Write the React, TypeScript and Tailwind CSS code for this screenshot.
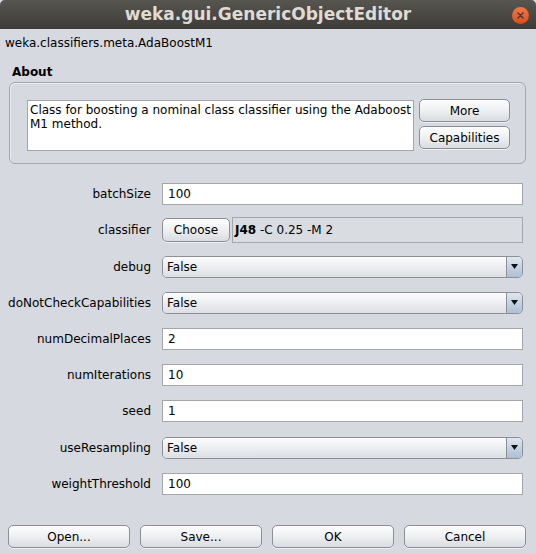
import React from "react";

const font = { fontFamily: '"DejaVu Sans", "Liberation Sans", sans-serif' };

const btn =
  "flex items-center justify-center rounded-[5px] border border-[#8c9096] bg-gradient-to-b from-[#fdfdfd] via-[#eef0f2] to-[#d9dce0] text-[12px] text-black shadow-[0_1px_0_rgba(255,255,255,0.6)]";

const TextField = ({ value }: { value: string }) => (
  <div className="h-[22px] w-full border border-[#a3a6ab] bg-white pl-[5px] flex items-center text-[12px] text-black">
    {value}
  </div>
);

const Combo = ({ value }: { value: string }) => (
  <div className="h-[22px] w-full flex rounded-[5px] border border-[#8c9096] overflow-hidden">
    <div className="flex-1 flex items-center pl-[4px] text-[12px] text-black bg-gradient-to-b from-[#fcfcfd] via-[#eceef1] to-[#dcdfe3]">
      {value}
    </div>
    <div className="w-[16px] flex items-center justify-center border-l border-[#8c9096] bg-gradient-to-b from-[#dfe7f1] via-[#c4d2e3] to-[#aebfd5]">
      <svg width="7" height="5" viewBox="0 0 7 5">
        <path d="M0 0h7L3.5 5z" fill="#111" />
      </svg>
    </div>
  </div>
);

const rows: { label: string; kind: "text" | "combo" | "classifier"; value: string }[] = [
  { label: "batchSize", kind: "text", value: "100" },
  { label: "classifier", kind: "classifier", value: "" },
  { label: "debug", kind: "combo", value: "False" },
  { label: "doNotCheckCapabilities", kind: "combo", value: "False" },
  { label: "numDecimalPlaces", kind: "text", value: "2" },
  { label: "numIterations", kind: "text", value: "10" },
  { label: "seed", kind: "text", value: "1" },
  { label: "useResampling", kind: "combo", value: "False" },
  { label: "weightThreshold", kind: "text", value: "100" },
];

export default function App() {
  return (
    <div className="w-[536px] h-[554px] bg-[#d6d9df] flex flex-col overflow-hidden" style={font}>
      {/* Title bar */}
      <div className="relative h-[29px] shrink-0 bg-gradient-to-b from-[#57554f] to-[#3d3c38] rounded-t-[5px] flex items-center justify-center">
        <span className="text-[17px] font-bold text-[#dfdbd2]">weka.gui.GenericObjectEditor</span>
        <div className="absolute right-[7px] top-[7px] w-[17px] h-[17px] rounded-full bg-gradient-to-b from-[#f07746] to-[#df4a16] flex items-center justify-center">
          <svg width="7" height="7" viewBox="0 0 7 7">
            <path d="M1 1l5 5M6 1l-5 5" stroke="#3c3b37" strokeWidth="1.4" strokeLinecap="round" />
          </svg>
        </div>
      </div>

      <div className="pl-[5px] pt-[7px] text-[12px] leading-[14px] text-black">weka.classifiers.meta.AdaBoostM1</div>

      <div className="pl-[12px] mt-[15px] text-[12px] leading-[14px] font-bold text-black">About</div>

      {/* About box */}
      <div className="mx-[9px] w-[517px] mt-[3px] h-[82px] shrink-0 rounded-[6px] border border-[#a4a7ac] shadow-[inset_1px_1px_0_rgba(255,255,255,0.5)] flex pl-[17px] pt-[17px] gap-[5px]">
        <div className="w-[387px] h-[51px] bg-white border border-[#a3a6ab] pl-[2px] pt-[2px] text-[12px] leading-[14px] text-black">
          Class for boosting a nominal class classifier using the Adaboost
          <br />
          M1 method.
        </div>
        <div className="flex flex-col gap-[4px] -mt-[1px]">
          <div className={`${btn} w-[91px] h-[23px]`}>More</div>
          <div className={`${btn} w-[91px] h-[23px]`}>Capabilities</div>
        </div>
      </div>

      {/* Properties */}
      <div className="mt-[12px] h-[326px] flex flex-col shrink-0">
        {rows.map((r) => (
          <div key={r.label} className="flex-1 flex items-center">
            <div className="w-[151px] text-right text-[12px] text-black">{r.label}</div>
            <div className="ml-[11px] w-[361px] flex items-center">
              {r.kind === "text" && <TextField value={r.value} />}
              {r.kind === "combo" && <Combo value={r.value} />}
              {r.kind === "classifier" && (
                <div className="flex items-center w-full gap-[2px]">
                  <div className={`${btn} w-[68px] h-[24px] border-[#6f95c8] shadow-[0_0_0_1px_rgba(140,175,220,0.5)]`}>Choose</div>
                  <div className="flex-1 h-[26px] border border-[#a3a6ab] bg-[#d9dce1] flex items-center pl-[2px] text-[12px] text-black">
                    <span className="font-bold">J48</span>
                    <span>&nbsp;-C 0.25 -M 2</span>
                  </div>
                </div>
              )}
            </div>
          </div>
        ))}
      </div>

      {/* Bottom buttons */}
      <div className="mt-auto mb-[6px] px-[8px] flex gap-[10px]">
        {["Open...", "Save...", "OK", "Cancel"].map((b) => (
          <div key={b} className={`${btn} w-[122px] h-[23px]`}>
            {b}
          </div>
        ))}
      </div>
    </div>
  );
}
